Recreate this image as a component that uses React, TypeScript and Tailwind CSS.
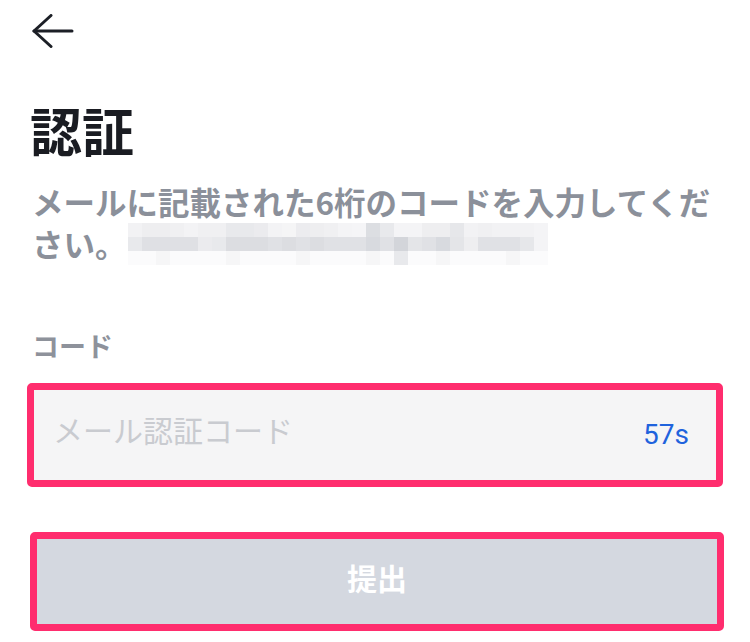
import React from 'react';

const row1 = ['#f2f2f4', '#eeeef0', '#eeeef0', '#f0f0f2', '#f3f3f5', '#f0f0f2', '#f0f0f2', '#e8e9ec', '#e8e9ec', '#ebebee', '#f3f3f5', '#f5f5f6', '#ececef', '#eeeef0', '#f0f0f2', '#f4f4f6', '#f5f5f7', '#dcdee2', '#e8e9ec', '#f4f4f6', '#f4f4f6', '#eeeef0', '#eeeef0', '#e6e7ea', '#f2f2f4', '#f0f0f2', '#f2f2f4', '#f2f2f4', '#f2f2f4', '#f4f4f6'];
const row2 = ['#e8e9ec', '#dfe0e4', '#dfe0e4', '#dfe0e4', '#dfe0e4', '#ebebee', '#e8e9ec', '#dcdde1', '#dcdde1', '#dcdde1', '#e0e1e5', '#dcdde1', '#e0e1e5', '#dcdde1', '#e0e1e5', '#e0e1e5', '#e0e1e5', '#d8dadf', '#e0e1e5', '#d3d5da', '#e4e5e8', '#e0e1e5', '#d8dadf', '#e4e5e8', '#eeeef0', '#e0e1e5', '#e0e1e5', '#e0e1e5', '#e6e7ea', '#f4f4f6'];
const row3 = row2.map((_, i) => (i === 19 ? '#e8e9ec' : i % 5 === 2 ? '#f6f6f7' : '#fbfbfc'));

function Mosaic() {
  return (
    <span className="inline-flex flex-col align-top ml-[1px] mt-[1px]">
      {[row1, row2, row3].map((row, r) => (
        <span key={r} className="flex">
          {row.map((c, i) => (
            <span key={i} className="block w-[14px] h-[14px]" style={{ backgroundColor: c }} />
          ))}
        </span>
      ))}
    </span>
  );
}

export default function App() {
  return (
    <div
      className="w-[750px] h-[642px] bg-white overflow-hidden"
      style={{ fontFamily: '"Noto Sans CJK JP", "Noto Sans", sans-serif' }}
    >
      {/* Header */}
      <div className="pt-[14px] pl-[32px] h-[48px]">
        <svg width="42" height="34" viewBox="0 0 42 34" fill="none" stroke="#1c1f26" strokeWidth="3" strokeLinecap="round" strokeLinejoin="round">
          <path d="M2 17H40" />
          <path d="M19 1.5L2 17L19 32.5" />
        </svg>
      </div>

      {/* Title */}
      <h1 className="mt-[52px] pl-[30px] text-[52px] leading-[60px] font-bold text-[#1a1c22]">認証</h1>

      <p className="mt-[20px] pl-[32px] text-[31.5px] leading-[42px] font-bold text-[#8b909a] whitespace-nowrap">
        メールに記載された6桁のコードを入力してくだ
        <br />
        さい。
        <Mosaic />
      </p>

      {/* Code field */}
      <div className="mt-[65px] pl-[32px] text-[27px] leading-[32px] font-semibold text-[#8e929b]">コード</div>

      <div className="mt-[21px] ml-[27px] w-[696px] h-[104px] border-[7px] border-[#ff2d6e] rounded-[5px] bg-[#f5f5f6] flex items-center justify-between pl-[19px] pr-[27px]">
        <span className="text-[30px] text-[#c9cbd0] -translate-y-[6px]">メール認証コード</span>
        <span
          className="text-[28px] text-[#1f63dd]"
          style={{ fontFamily: 'Roboto, "Noto Sans", sans-serif' }}
        >
          57s
        </span>
      </div>

      {/* Submit */}
      <div className="mt-[45px] ml-[30px] w-[694px] h-[99px] border-[7px] border-[#ff2d6e] rounded-[5px] bg-[#d4d8e0] flex items-center justify-center">
        <span className="text-[30px] font-bold text-white -translate-y-[4px]">提出</span>
      </div>
    </div>
  );
}
